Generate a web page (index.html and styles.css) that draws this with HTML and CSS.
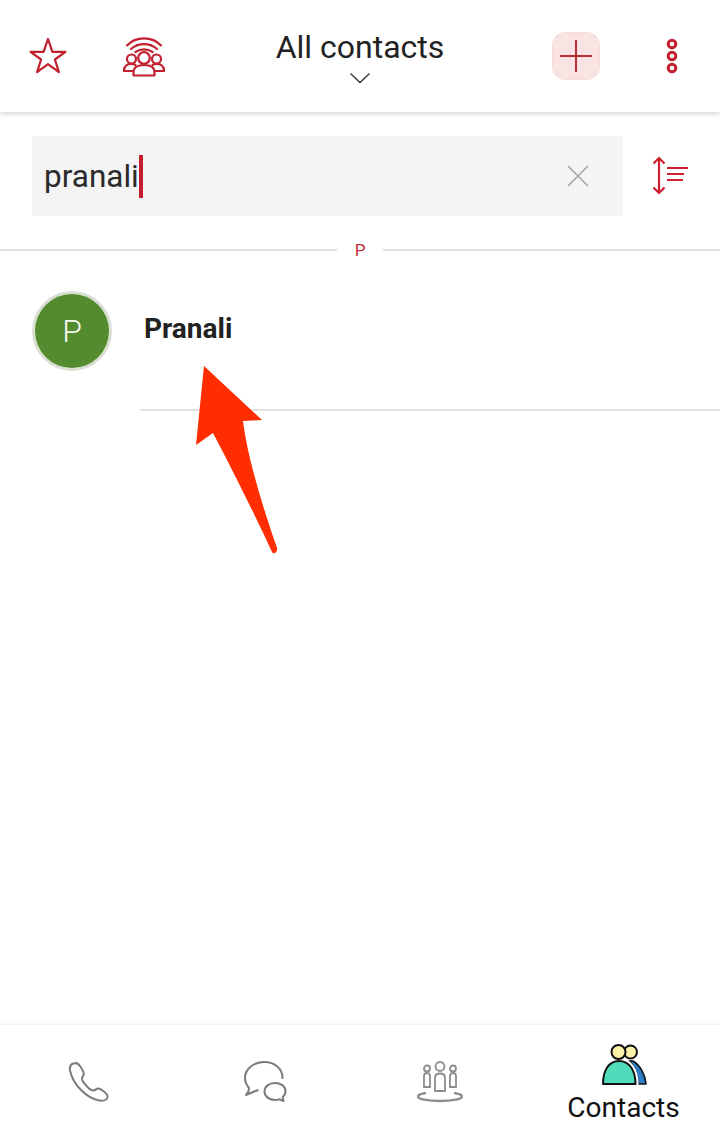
FILE: index.html
```html
<!DOCTYPE html>
<html lang="en">
<head>
    <meta charset="UTF-8">
    <meta name="viewport" content="width=device-width, initial-scale=1.0">
    <title>All contacts</title>
    <link rel="stylesheet" href="styles.css">
</head>
<body>
    <div class="page">
        <header class="topbar">
            <button class="icon-btn">
                <svg width="40" height="40" viewBox="0 0 40 40"><path class="red-line" d="M20 3l4.400 12.800h13l-10.500 7.700 4 12.700-10.900-8-10.900 8 4-12.700-10.500-7.700h13z"/></svg>
            </button>
            <button class="icon-btn">
                <svg width="48" height="44" viewBox="0 0 48 44">
                    <path class="red-line" d="M7 11.500c9-9.500 25-9.500 34 0M11 15c7-6.500 19-6.500 26 0M15.500 18c5-3.500 12-3.500 17 0"/>
                    <circle class="red-line" cx="24" cy="24" r="5.800"/>
                    <circle class="red-line" cx="11.500" cy="25" r="4.500"/>
                    <circle class="red-line" cx="36.500" cy="25" r="4.500"/>
                    <path class="red-line" d="M13.500 41.500v-3c0-5 4-7.500 10.500-7.500s10.500 2.500 10.500 7.500v3z"/>
                    <path class="red-line" d="M13 37H4c0-5 3-7 7.500-7 1.500 0 3 .3 4 1M35 37h9c0-5-3-7-7.500-7-1.500 0-3 .3-4 1"/>
                </svg>
            </button>
            <div class="title">
                <span>All contacts</span>
                <svg class="chevron" width="22" height="12" viewBox="0 0 22 12"><path d="M1.500 1.500L11 10.500l9.500-9"/></svg>
            </div>
            <button class="icon-btn">
                <span class="add-box">
                    <svg width="32" height="32" viewBox="0 0 32 32"><path class="red-plus" d="M16 0v32M0 16h32"/></svg>
                </span>
            </button>
            <button class="icon-btn">
                <svg width="16" height="38" viewBox="0 0 16 38">
                    <circle class="red-dot" cx="8" cy="7" r="3.800"/>
                    <circle class="red-dot" cx="8" cy="19" r="3.800"/>
                    <circle class="red-dot" cx="8" cy="31" r="3.800"/>
                </svg>
            </button>
        </header>

        <main class="content">
            <div class="search-row">
                <div class="search-box">
                    <span class="search-text">pranali</span>
                    <span class="cursor"></span>
                    <svg class="clear" width="24" height="24" viewBox="0 0 24 24"><path d="M2 2l20 20M22 2L2 22"/></svg>
                </div>
                <button class="sort-btn">
                    <svg width="38" height="40" viewBox="0 0 38 40">
                        <path class="red-sort" d="M8 2v35M2.500 7.500L8 2l5.500 5.500M2.500 31.500L8 37l5.500-5.500M16 12h21M16 18h17M16 24h16"/>
                    </svg>
                </button>
            </div>

            <div class="section-head">
                <span class="section-line"></span>
                <span class="section-letter">P</span>
                <span class="section-line"></span>
            </div>

            <div class="contact">
                <div class="avatar"><span>P</span></div>
                <div class="contact-name">Pranali</div>
            </div>
        </main>

        <nav class="tabbar">
            <div class="tab">
                <svg width="42" height="42" viewBox="0 0 42 42"><path class="grey-line" d="M5 2.500c-2.500 1-3.500 3.500-3 7 1.500 7 5 13.500 11 19.500 5 5 11 9.500 18.500 10.500 3.500.5 7-.5 8-3 .7-2-.5-3.500-3-5.500-2-1.500-4-3.300-6-3.500-2-.2-3 1.500-4.500 2-2 .5-4-1-6.500-3.500-2.500-2.500-5-5.500-5.500-8-.3-2 1.800-3 1.800-5 0-2-1.800-5-3.500-7.500-1.500-2.500-4-4-6.300-3z"/></svg>
            </div>
            <div class="tab">
                <svg width="44" height="44" viewBox="0 0 44 44">
                    <path class="grey-line" d="M38.500 18C39 8 31 1 20 1 9.500 1 1 8.500 1 17c0 4 1.500 7 4 10 .5 2.500-1.500 5-3 7l7-3 5.500-2"/>
                    <path class="grey-line" d="M31 22c-5.800 0-10.500 3.500-10.500 8.500S25.200 39 31 39c1.500 0 3-.2 4-.7l4.500 1.700-.8-4c1.700-1.400 2.800-3.400 2.800-6 0-5-5-8-10.500-8z"/>
                </svg>
            </div>
            <div class="tab">
                <svg width="46" height="44" viewBox="0 0 46 44">
                    <circle class="grey-soft" cx="23" cy="5.500" r="4.500"/>
                    <circle class="grey-soft" cx="10" cy="7.500" r="3"/>
                    <circle class="grey-soft" cx="36" cy="7.500" r="3"/>
                    <path class="grey-soft" d="M18 30V17c0-3 2-4.500 5-4.500s5 1.500 5 4.500v13z"/>
                    <path class="grey-soft" d="M7 26V15c0-2 1-3 3-3s3 1 3 3v11zM33 26V15c0-2 1-3 3-3s3 1 3 3v11z"/>
                    <path class="grey-ring" d="M9 32c-4.500.7-8 1.800-8 3.500C1 38 10.500 40 23 40s22-2 22-4.500c0-1.700-3.500-2.800-8-3.500"/>
                </svg>
            </div>
            <div class="tab tab-active">
                <svg width="46" height="42" viewBox="0 0 46 42">
                    <circle class="person-head" cx="29.500" cy="8" r="6.500"/>
                    <path class="person-back" d="M32 17c7 4 12.500 14 13 23h-8c0-9-4-19-9-23z"/>
                    <path class="person-gap" d="M2 40c0-14 6-23 16-23s16.500 9 16.500 23z"/>
                    <path class="person-front" d="M2 40c0-14 6-23 16-23s16.500 9 16.500 23z"/>
                    <circle class="person-head" cx="17.500" cy="8" r="7"/>
                </svg>
                <span class="tab-label">Contacts</span>
            </div>
        </nav>

        <svg class="arrow" width="84" height="194" viewBox="0 0 84 194">
            <path d="M9 1L67 55 48 56C52 90 67 140 82 183c1 4-3 7-5 4C60 150 35 100 18 68L1 80z"/>
        </svg>
    </div>
</body>
</html>
```

FILE: styles.css
```css
* {
    box-sizing: border-box;
}

body {
    margin: 0;
    background-color: #fff;
    font-family: 'Roboto', sans-serif;
    color: #222;
}

button {
    padding: 0;
    border: none;
    background: none;
}

svg {
    display: block;
}

.page {
    position: relative;
    display: flex;
    flex-direction: column;
    width: 720px;
    height: 1134px;
    overflow: hidden;
}

/* top bar */
.topbar {
    display: flex;
    flex-shrink: 0;
    height: 112px;
    box-shadow: 0 2px 5px rgba(0, 0, 0, 0.16);
}

.icon-btn {
    display: flex;
    justify-content: center;
    align-items: center;
    flex-shrink: 0;
    width: 96px;
    padding-bottom: 1px;
}

.title {
    display: flex;
    flex: 1;
    flex-direction: column;
    align-items: center;
    padding-top: 28px;
    font-size: 32px;
    line-height: 38px;
    color: #222;
}

.chevron {
    margin-top: 6px;
}

.chevron path {
    fill: none;
    stroke: #333;
    stroke-width: 1.300;
}

.red-line {
    fill: none;
    stroke: #c3202f;
    stroke-width: 2.200;
    stroke-linejoin: round;
    stroke-linecap: round;
}

.add-box {
    display: flex;
    justify-content: center;
    align-items: center;
    width: 48px;
    height: 48px;
    background-color: #fae3e3;
    border: 1px solid #f7dcdc;
    border-radius: 13px;
}

.red-plus {
    fill: none;
    stroke: #b9303a;
    stroke-width: 2;
}

.red-dot {
    fill: none;
    stroke: #c3202f;
    stroke-width: 3;
}

/* search */
.search-row {
    display: flex;
    padding: 24px 0 0 32px;
}

.search-box {
    display: flex;
    align-items: center;
    width: 591px;
    height: 80px;
    padding-left: 12px;
    background-color: #f4f4f5;
    border-radius: 4px;
}

.search-text {
    font-size: 31.500px;
    color: #2a2a2a;
}

.cursor {
    width: 4px;
    height: 43px;
    background-color: #c21e2e;
}

.clear {
    margin-left: auto;
    margin-right: 33px;
}

.clear path {
    fill: none;
    stroke: #a0a0a0;
    stroke-width: 1.400;
}

.sort-btn {
    display: flex;
    justify-content: center;
    align-items: center;
    padding: 0 0 0 28px;
}

.red-sort {
    fill: none;
    stroke: #cc2030;
    stroke-width: 2.200;
}

/* contact list */
.section-head {
    display: flex;
    align-items: center;
    height: 20px;
    margin-top: 24px;
}

.section-line {
    flex: 1;
    height: 2px;
    background-color: #e0e0e0;
}

.section-letter {
    width: 46px;
    font-size: 17px;
    text-align: center;
    color: #b9303a;
}

.contact {
    position: relative;
    display: flex;
    height: 150px;
    margin-top: 31px;
    padding-left: 32px;
}

.avatar {
    display: flex;
    justify-content: center;
    align-items: center;
    flex-shrink: 0;
    width: 80px;
    height: 80px;
    background-color: #558b2f;
    border: 2px solid #fff;
    outline: 2px solid #dcdfd8;
    outline-offset: -2px;
    border-radius: 50%;
    box-shadow: inset 0 0 0 1px #e6efe0;
    font-size: 32px;
    font-weight: 300;
    color: #f4f8ef;
}

.contact-name {
    margin: 22px 0 0 32px;
    font-size: 28px;
    line-height: 32px;
    font-weight: 700;
    color: #222;
}

.contact::after {
    content: "";
    position: absolute;
    left: 140px;
    right: 0;
    bottom: 30px;
    height: 2px;
    background-color: #e2e2e2;
}

.content {
    flex: 1;
}

/* bottom tabs */
.tabbar {
    display: grid;
    grid-template-columns: 178px 175px 174px 193px;
    flex-shrink: 0;
    height: 110px;
    border-top: 1px solid #f1f1f1;
    box-shadow: 0 -2px 3px rgba(0, 0, 0, 0.03);
}

.tab {
    display: flex;
    flex-direction: column;
    align-items: center;
    padding-top: 36px;
}

.tab-active {
    padding-top: 19px;
}

.tab-label {
    margin-top: 5px;
    font-size: 28px;
    line-height: 34px;
    color: #111;
}

.grey-line {
    fill: none;
    stroke: #7c7c7c;
    stroke-width: 2;
    stroke-linejoin: round;
}

.grey-soft {
    fill: none;
    stroke: #8c8c8c;
    stroke-width: 1.800;
}

.grey-ring {
    fill: none;
    stroke: #8c8c8c;
    stroke-width: 2.400;
}

.person-head {
    fill: #fbf1a9;
    stroke: #111;
    stroke-width: 2;
}

.person-front {
    fill: #4fdcba;
    stroke: #111;
    stroke-width: 2;
    stroke-linejoin: round;
}

.person-back {
    fill: #2a7cc4;
    stroke: #111;
    stroke-width: 1.600;
    stroke-linejoin: round;
}

.person-gap {
    fill: #fff;
    stroke: #fff;
    stroke-width: 6;
}

/* annotation drawn over the screenshot */
.arrow {
    position: absolute;
    left: 195px;
    top: 365px;
}

.arrow path {
    fill: #ff2d00;
}
```
